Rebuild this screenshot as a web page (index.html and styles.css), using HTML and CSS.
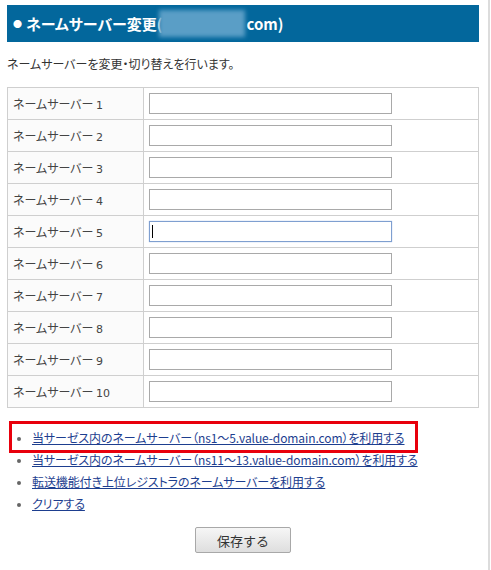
FILE: index.html
```html
<!DOCTYPE html>
<html lang="ja">
<head>
<meta charset="utf-8">
<link rel="stylesheet" href="styles.css">
</head>
<body>
<div class="page">
  <h1 class="title"><span class="dot">●</span>ネームサーバー変更(<span class="blur"></span>com)</h1>
  <p class="desc">ネームサーバーを変更・切り替えを行います。</p>
  <table class="ns">
    <tr><th>ネームサーバー <span class="num">1</span></th><td><input class="field" type="text"></td></tr>
    <tr><th>ネームサーバー <span class="num">2</span></th><td><input class="field" type="text"></td></tr>
    <tr><th>ネームサーバー <span class="num">3</span></th><td><input class="field" type="text"></td></tr>
    <tr><th>ネームサーバー <span class="num">4</span></th><td><input class="field" type="text"></td></tr>
    <tr><th>ネームサーバー <span class="num">5</span></th><td><span class="caretwrap"><input class="field focused" type="text"></span></td></tr>
    <tr><th>ネームサーバー <span class="num">6</span></th><td><input class="field" type="text"></td></tr>
    <tr><th>ネームサーバー <span class="num">7</span></th><td><input class="field" type="text"></td></tr>
    <tr><th>ネームサーバー <span class="num">8</span></th><td><input class="field" type="text"></td></tr>
    <tr><th>ネームサーバー <span class="num">9</span></th><td><input class="field" type="text"></td></tr>
    <tr><th>ネームサーバー <span class="num">10</span></th><td><input class="field" type="text"></td></tr>
  </table>
  <ul class="links">
    <li class="marked"><a href="#">当サーゼス内のネームサーバー（ns1〜5.value-domain.com）を利用する</a></li>
    <li><a href="#">当サーゼス内のネームサーバー（ns11〜13.value-domain.com）を利用する</a></li>
    <li><a href="#">転送機能付き上位レジストラのネームサーバーを利用する</a></li>
    <li><a href="#">クリアする</a></li>
  </ul>
  <div class="actions"><button class="save" type="button">保存する</button></div>
</div>
</body>
</html>
```

FILE: styles.css
```css
html, body {
  margin: 0;
  padding: 0;
  background: #fff;
}
body {
  font-family: "Noto Sans CJK JP", "DejaVu Sans", sans-serif;
  font-size: 12px;
  color: #333;
  font-feature-settings: "palt";
}
.page {
  width: 472px;
  height: 565px;
  padding: 5px 9px 0 7px;
  border-right: 2px solid #dcdcdc;
}
.title {
  margin: 0;
  height: 37px;
  background: #03679c;
  color: #fff;
  font-size: 15px;
  font-weight: bold;
  line-height: 37px;
  padding-left: 6px;
  display: flex;
  align-items: center;
  white-space: nowrap;
}
.dot {
  font-size: 9px;
  margin-right: 4px;
}
.blur {
  display: inline-block;
  width: 86px;
  height: 27px;
  background: #5a9ec6;
  filter: blur(2px);
  margin: 0 1px 0 -3px;
}
.desc {
  margin: 13px 0 14px;
  line-height: 18px;
}
.ns {
  width: 472px;
  border-collapse: collapse;
  border: 1px solid #cfcfcf;
}
.ns th, .ns td {
  border: 1px solid #cfcfcf;
  height: 31px;
  padding: 0;
  vertical-align: middle;
}
.ns th {
  width: 130px;
  padding-left: 5px;
  text-align: left;
  font-weight: normal;
  background: #fbfbfb;
  color: #444;
}
.num {
  font-family: "DejaVu Sans", sans-serif;
  font-size: 11px;
}
.ns td {
  padding-left: 5px;
}
.field {
  display: block;
  box-sizing: border-box;
  width: 243px;
  height: 21px;
  margin: 0;
  padding: 0 3px;
  border: 1px solid #a9a9a9;
  background: #fff;
  outline: none;
}
.field.focused {
  border-color: #7f9fd0;
  box-shadow: 0 0 1px #9ab8e6;
}
.caretwrap {
  position: relative;
  display: block;
  width: 243px;
}
.caretwrap::after {
  content: "";
  position: absolute;
  left: 3px;
  top: 4px;
  width: 1px;
  height: 13px;
  background: #000;
}
.links {
  margin: 19px 0 0;
  padding-left: 25px;
  list-style: disc;
}
.links li {
  line-height: 22px;
  position: relative;
}
.links li::marker {
  color: #666;
  font-size: 10px;
}
.links a {
  color: #1d3e8f;
  text-decoration: underline;
  letter-spacing: -0.1px;
}
.marked::after {
  content: "";
  position: absolute;
  left: -23px;
  top: -6px;
  width: 403px;
  height: 26px;
  border: 3px solid #e8000c;
}
.actions {
  display: flex;
  justify-content: center;
  margin-top: 12px;
}
.save {
  width: 96px;
  height: 26px;
  font-family: "Noto Sans CJK JP", sans-serif;
  font-size: 13px;
  color: #333;
  border: 1px solid #a8a8a8;
  border-radius: 2px;
  background: linear-gradient(#f6f6f6, #dedede);
  padding: 0;
}
```
